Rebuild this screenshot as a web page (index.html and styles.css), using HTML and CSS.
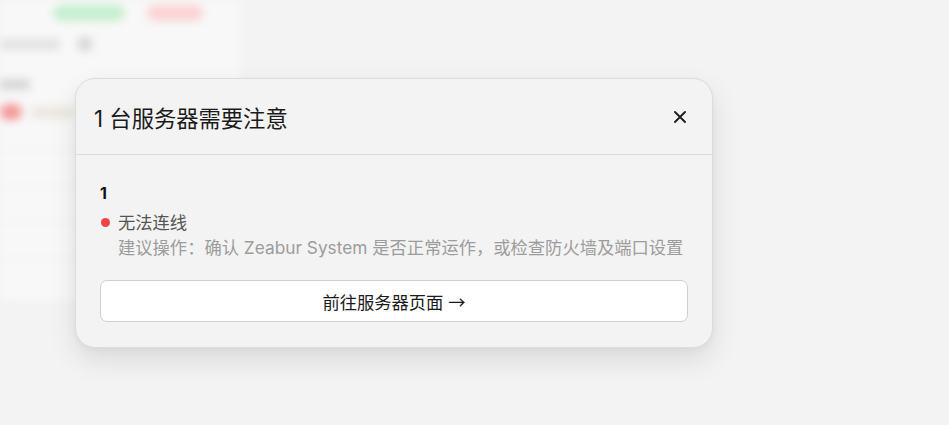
FILE: index.html
```html
<!DOCTYPE html>
<html lang="zh-CN">
<head>
<meta charset="utf-8">
<title>服务器提醒</title>
<link rel="stylesheet" href="styles.css">
</head>
<body>
<div class="page">
  <div class="backdrop">
    <div class="bd-row bd-top">
      <span class="pill pill-green"></span>
      <span class="pill pill-red"></span>
    </div>
    <div class="bd-row bd-meta">
      <span class="bar bar-60"></span>
      <span class="sq"></span>
    </div>
    <div class="bd-row bd-label">
      <span class="bar bar-30"></span>
    </div>
    <div class="bd-row bd-status">
      <span class="pill pill-red2"></span>
      <span class="bar bar-40"></span>
    </div>
    <div class="bd-lines">
      <div class="bd-line"></div>
      <div class="bd-line"></div>
      <div class="bd-line"></div>
      <div class="bd-line"></div>
    </div>
  </div>

  <div class="modal" role="dialog">
    <div class="modal-header">
      <h2 class="modal-title">1 台服务器需要注意</h2>
      <button class="close" aria-label="关闭">
        <svg width="12" height="12" viewBox="0 0 12 12"><path d="M1 1 L11 11 M11 1 L1 11" stroke="#1a1a1a" stroke-width="1.8" stroke-linecap="round" fill="none"/></svg>
      </button>
    </div>
    <div class="modal-body">
      <div class="server-name">1</div>
      <div class="issue">
        <span class="dot"></span>
        <span class="issue-text">无法连线</span>
      </div>
      <div class="advice">建议操作：确认 Zeabur System 是否正常运作，或检查防火墙及端口设置</div>
      <button class="go-btn">前往服务器页面 <span class="arrow">→</span></button>
    </div>
  </div>
</div>
</body>
</html>
```

FILE: styles.css
```css
* { box-sizing: border-box; }
html, body {
  margin: 0;
  padding: 0;
  width: 949px;
  height: 425px;
  overflow: hidden;
  background: #f3f3f3;
  font-family: Inter, "Noto Sans CJK SC", sans-serif;
}
.page {
  position: relative;
  width: 949px;
  height: 425px;
  background: #f3f3f3;
  overflow: hidden;
}
.backdrop {
  width: 240px;
  height: 300px;
  background: #f8f8f8;
  filter: blur(4px);
  display: flex;
  flex-direction: column;
}
.bd-row { display: flex; align-items: center; }
.bd-top { padding: 5px 0 0 53px; gap: 22px; }
.bd-meta { padding: 16px 0 0 0; gap: 18px; }
.bd-label { padding: 28px 0 0 0; }
.bd-status { padding: 14px 0 0 0; gap: 10px; }
.pill { display: block; height: 16px; border-radius: 8px; }
.pill-green { width: 72px; background: #c6efcf; }
.pill-red { width: 56px; background: #fbd3d3; }
.pill-red2 { width: 22px; background: #f59a9a; }
.bar { display: block; height: 11px; border-radius: 3px; }
.bar-60 { width: 60px; background: #e2e2e2; }
.bar-30 { width: 30px; background: #d6d6d6; }
.bar-40 { width: 42px; background: #ebe6de; }
.sq { display: block; width: 14px; height: 14px; border-radius: 3px; background: #d8d8d8; }
.bd-lines { padding-top: 30px; display: flex; flex-direction: column; gap: 35px; }
.bd-line { height: 1px; background: #ececec; }

.modal {
  position: absolute;
  left: 75px;
  top: 78px;
  width: 638px;
  background: #f3f3f3;
  border: 1px solid #dcdcdc;
  border-radius: 20px;
  box-shadow: 0 12px 28px rgba(0, 0, 0, 0.10), 0 2px 6px rgba(0, 0, 0, 0.04);
}
.modal-header {
  height: 76px;
  display: flex;
  align-items: center;
  justify-content: space-between;
  padding: 0 26px 0 18px;
  border-bottom: 1px solid #dcdcdc;
}
.modal-title {
  margin: 0;
  font-size: 22.3px;
  font-weight: 400;
  color: #1a1a1a;
}
.close {
  background: none;
  border: 0;
  padding: 0;
  width: 12px;
  height: 12px;
  display: flex;
  cursor: pointer;
}
.modal-body {
  padding: 24px 24px 25px 24px;
  display: flex;
  flex-direction: column;
}
.server-name {
  font-size: 16px;
  font-weight: 700;
  line-height: 28px;
  color: #111;
}
.issue {
  display: flex;
  align-items: center;
  gap: 8px;
  margin-top: 3px;
  font-size: 17.3px;
  line-height: 25px;
}
.dot {
  width: 9px;
  height: 9px;
  border-radius: 50%;
  background: #ef4444;
  flex: none;
  margin-left: 1px;
}
.issue-text { color: #555; }
.advice {
  padding-left: 18px;
  font-size: 17.3px;
  line-height: 25px;
  color: #9c9c9c;
  white-space: nowrap;
}
.go-btn {
  margin-top: 20px;
  height: 42px;
  width: 100%;
  background: #ffffff;
  border: 1px solid #cfcfcf;
  border-radius: 7px;
  font-family: Inter, "Noto Sans CJK SC", sans-serif;
  font-size: 17.3px;
  color: #1a1a1a;
  cursor: pointer;
}
.arrow {
  font-family: "Noto Sans CJK SC", sans-serif;
}
```
